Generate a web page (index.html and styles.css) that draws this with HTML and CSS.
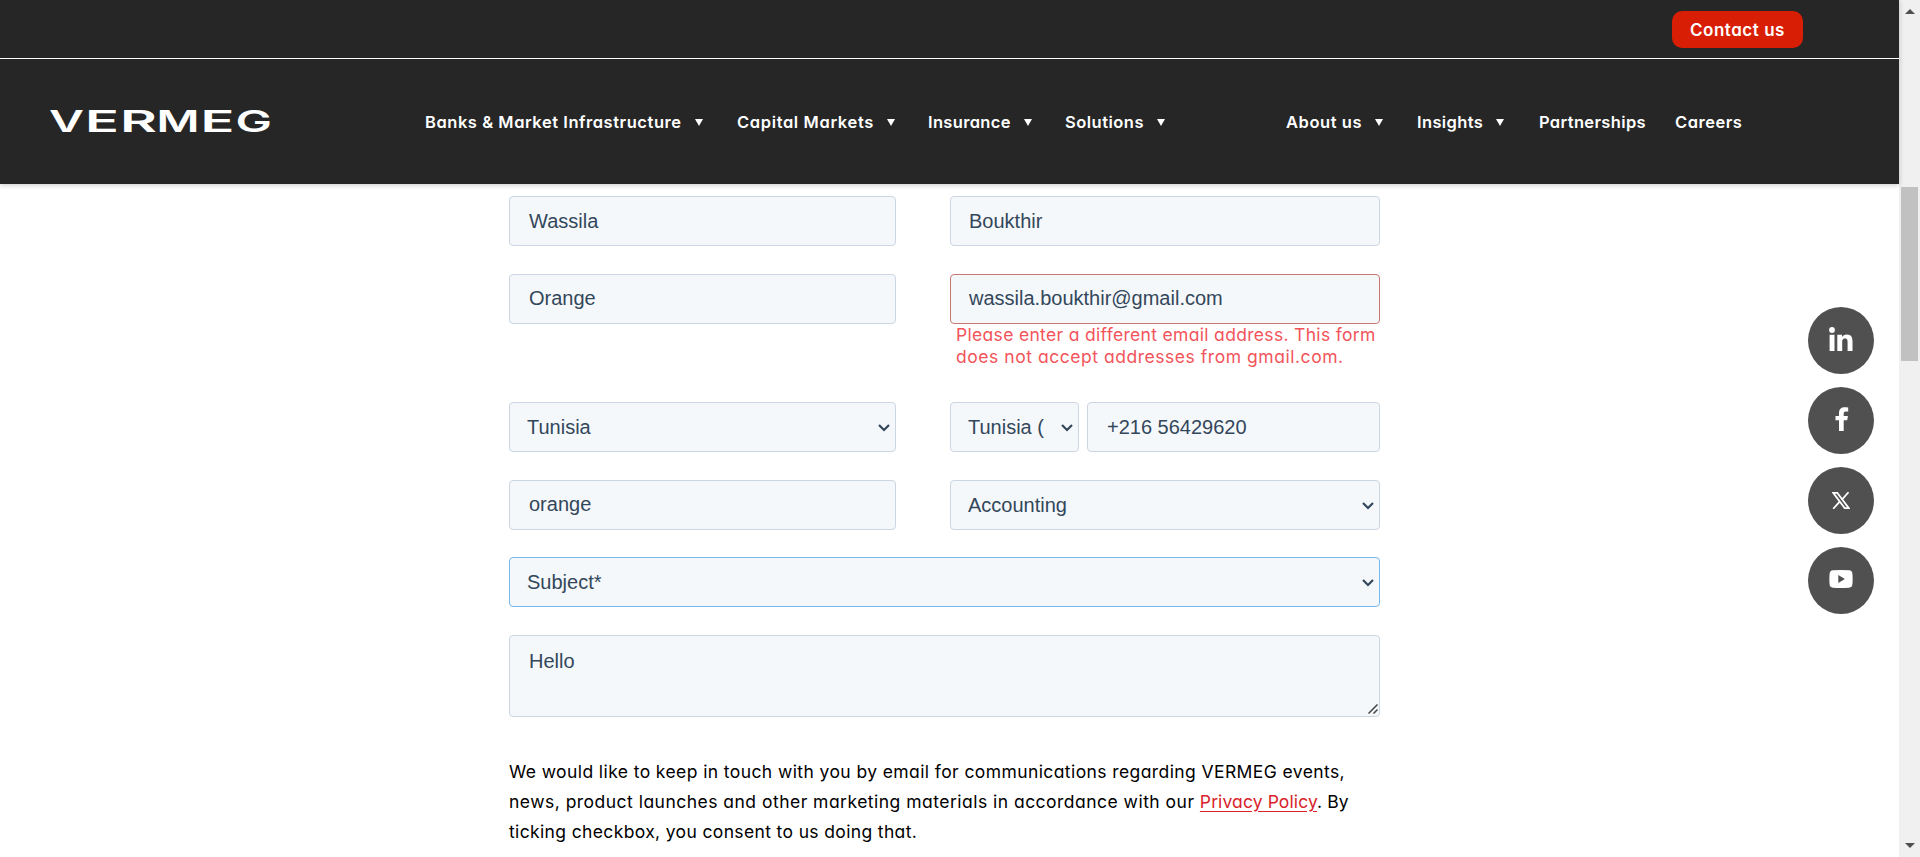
FILE: index.html
```html
<!DOCTYPE html>
<html lang="en">
<head>
<meta charset="utf-8">
<title>VERMEG - Contact us</title>
<link rel="stylesheet" href="styles.css">
</head>
<body>
<div class="page">
  <header class="header">
    <div class="topbar"><a class="contact"><span>Contact us</span></a></div>
    <div class="navbar">
      <svg class="logo" width="226" height="48" viewBox="-2 -10 226 48" role="img" aria-label="VERMEG">
        <g class="logo-text">
          <text x="-1" y="22" textLength="35" lengthAdjust="spacingAndGlyphs">V</text>
          <text x="35" y="22" textLength="34" lengthAdjust="spacingAndGlyphs">E</text>
          <text x="70" y="22" textLength="37" lengthAdjust="spacingAndGlyphs">R</text>
          <text x="106.500" y="22" textLength="43" lengthAdjust="spacingAndGlyphs">M</text>
          <text x="150.500" y="22" textLength="34" lengthAdjust="spacingAndGlyphs">E</text>
          <text x="185.500" y="22" textLength="36.500" lengthAdjust="spacingAndGlyphs">G</text>
        </g>
      </svg>
      <nav class="menu">
        <a class="item banks"><span>Banks &amp; Market Infrastructure</span><i class="caret"></i></a>
        <a class="item capital"><span>Capital Markets</span><i class="caret"></i></a>
        <a class="item insurance"><span>Insurance</span><i class="caret"></i></a>
        <a class="item solutions"><span>Solutions</span><i class="caret"></i></a>
        <a class="item about"><span>About us</span><i class="caret"></i></a>
        <a class="item insights"><span>Insights</span><i class="caret"></i></a>
        <a class="item partnerships"><span>Partnerships</span></a>
        <a class="item careers"><span>Careers</span></a>
      </nav>
    </div>
  </header>

  <main class="form">
    <div class="row">
      <div class="field">Wassila</div>
      <div class="field right">Boukthir</div>
    </div>
    <div class="row row-error">
      <div class="field raised">Orange</div>
      <div class="column">
        <div class="field raised right invalid">wassila.boukthir@gmail.com</div>
        <p class="error"><span class="e1">Please enter a different email address. This form</span><br><span class="e2">does not accept addresses from gmail.com.</span></p>
      </div>
    </div>
    <div class="row">
      <div class="field select"><span>Tunisia</span><svg class="chevron" viewBox="0 0 12 8"><path d="M1 1l5 5 5-5"/></svg></div>
      <div class="phone">
        <div class="field select"><span>Tunisia (</span><svg class="chevron" viewBox="0 0 12 8"><path d="M1 1l5 5 5-5"/></svg></div>
        <div class="field">+216 56429620</div>
      </div>
    </div>
    <div class="row row-short">
      <div class="field raised">orange</div>
      <div class="field select"><span>Accounting</span><svg class="chevron" viewBox="0 0 12 8"><path d="M1 1l5 5 5-5"/></svg></div>
    </div>
    <div class="field select focused"><span>Subject*</span><svg class="chevron" viewBox="0 0 12 8"><path d="M1 1l5 5 5-5"/></svg></div>
    <div class="field area">Hello<svg class="grip" viewBox="0 0 10 10"><path d="M0.5 9.500l9-9M5.500 9.500l4-4"/></svg></div>
    <p class="consent"><span class="c1">We would like to keep in touch with you by email for communications regarding VERMEG events,</span><br><span class="c2">news, product launches and other marketing materials in accordance with our </span><span class="c2-end"><a class="policy">Privacy Policy</a>. By</span><br><span class="c3">ticking checkbox, you consent to us doing that.</span></p>
  </main>

  <aside class="social">
    <a><svg width="24" height="24" viewBox="0 0 24 24"><circle cx="3" cy="3" r="2.900"/><path d="M.6 7.800h4.900V24H.6zM8.300 7.800H13V10c.9-1.600 2.600-2.600 4.900-2.600 4.600 0 5.600 3 5.600 7V24h-4.900v-8.500c0-2-.1-4-2.600-4s-2.800 1.900-2.800 3.900V24H8.300z"/></svg></a>
    <a><svg class="fb" width="14" height="24" viewBox="0 0 14 24"><path d="M4 24V13.300H.5V9H4V6.200C4 2.300 6.200.3 9.700.3c1.600 0 3.100.2 3.500.3v4h-2.300C9.200 4.600 8.700 5.500 8.700 6.700V9h4.200l-.7 4.300H8.700V24z"/></svg></a>
    <a><svg class="x" width="18" height="17" viewBox="0 0 18 17"><path d="M1.200.8h4l11.600 15.400h-4zM16.500.2L10.100 7.500M7.700 9.600L1.200 16.800"/></svg></a>
    <a><svg width="24" height="18" viewBox="0 0 24 18"><path fill-rule="evenodd" d="M4 .3Q12-.3 20 .3q3.200.2 3.400 3.400.5 5.300 0 10.600-.2 3.200-3.400 3.400-8 .6-16 0-3.200-.2-3.400-3.400-.5-5.300 0-10.600Q.8.500 4 .3zM9.300 5v8l6.600-4z"/></svg></a>
  </aside>
</div>
<div class="scrollbar"><i class="up"></i><i class="thumb"></i><i class="down"></i></div>
</body>
</html>
```
FILE: styles.css
```css
* { box-sizing: border-box; }
body {
  margin: 0;
  display: flex;
  width: 1920px;
  height: 857px;
  overflow: hidden;
  background: #fff;
}
.page { position: relative; width: 1899px; height: 857px; }
.header {
  height: 184px;
  background: #262626;
  color: #fff;
  box-shadow: 0 1px 5px rgba(0, 0, 0, .22);
  font: 600 16.500px/20px Inter, sans-serif;
  font-feature-settings: "cv11";
}
.topbar {
  display: flex;
  justify-content: flex-end;
  height: 59px;
  padding: 11px 96px 0 0;
  border-bottom: 1px solid #fff;
}
.contact {
  width: 131px;
  height: 37px;
  padding: 9px 0 0 18px;
  border-radius: 10px;
  background: #d81e05;
  white-space: nowrap;
}
.contact span { font-size: 17px; letter-spacing: .53px; }
.navbar { display: flex; height: 125px; }
.logo { flex: none; margin: 41px 0 0 48px; }
.logo-text { fill: #fff; font: 600 30px Inter, sans-serif; }
.menu { display: flex; margin: 53px 0 0 151px; }
.item { display: flex; align-items: center; height: 20px; white-space: nowrap; }
.banks { width: 312px; letter-spacing: .55px; }
.capital { width: 191px; letter-spacing: .64px; }
.insurance { width: 137px; letter-spacing: .34px; }
.solutions { width: 221px; letter-spacing: .49px; }
.about { width: 131px; letter-spacing: .56px; }
.insights { width: 122px; letter-spacing: .37px; }
.partnerships { width: 136px; letter-spacing: .35px; }
.careers { letter-spacing: .51px; }
.caret {
  margin-left: 13px;
  border: 4.500px solid transparent;
  border-top: 7px solid #fff;
  border-bottom: 0;
}
.form {
  width: 871px;
  margin: 12px 0 0 509px;
  color: #33475b;
  font: 20px/24px "Liberation Sans", Arial, sans-serif;
}
.row {
  display: grid;
  grid-template-columns: 387px 430px;
  column-gap: 54px;
  align-items: start;
  margin-bottom: 28px;
}
.row-error { height: 100px; }
.row-short { margin-bottom: 27px; }
.field {
  height: 50px;
  padding: 12px 0 0 19px;
  border: 1px solid #cbd6e2;
  border-radius: 4px;
  background: #f5f8fa;
  white-space: nowrap;
}
.right { padding-left: 18px; }
.raised { padding-top: 11px; }
.invalid { border-color: #c87872; }
.select {
  display: flex;
  justify-content: space-between;
  padding-left: 17px;
  padding-right: 5px;
}
.focused { border-color: #76b9ec; }
.chevron {
  width: 12px;
  height: 8px;
  margin-top: 9px;
  fill: none;
  stroke: #33475b;
  stroke-width: 2.200;
}
.phone { display: grid; grid-template-columns: 129px 293px; column-gap: 8px; }
.error {
  margin: 0 0 0 6px;
  color: #f2545b;
  font: 17.500px/22px Inter, sans-serif;
  font-feature-settings: "cv11";
  white-space: nowrap;
}
.e1 { letter-spacing: .32px; }
.e2 { letter-spacing: .54px; }
.area { position: relative; height: 82px; margin-top: 28px; padding-top: 13px; }
.grip {
  position: absolute;
  right: 1px;
  bottom: 2px;
  width: 10px;
  height: 10px;
  fill: none;
  stroke: #444;
  stroke-width: 1.500;
}
.consent {
  margin: 40px 0 0;
  color: #000;
  font: 17.500px/30px Inter, sans-serif;
  font-feature-settings: "cv11";
  white-space: nowrap;
}
.c1 { letter-spacing: .405px; }
.c2 { letter-spacing: .48px; }
.c2-end { letter-spacing: .11px; }
.c3 { letter-spacing: .36px; }
.policy { color: #d8232a; text-decoration: underline; text-underline-offset: 3px; }
.social {
  position: absolute;
  top: 307px;
  left: 1808px;
  display: grid;
  gap: 13px;
}
.social a {
  display: grid;
  place-items: center;
  width: 66px;
  height: 67px;
  border-radius: 50%;
  background: #505050;
}
.social svg { fill: #fff; margin-bottom: 4px; }
.social .fb { margin-left: 1px; }
.social .x { fill: none; stroke: #fff; stroke-width: 1.800; margin: 0; }
.scrollbar {
  display: flex;
  flex-direction: column;
  align-items: center;
  width: 21px;
  height: 857px;
  padding: 9px 0;
  background: #f0f0f0;
}
.up { border: 5px solid transparent; border-top: 0; border-bottom-color: #505050; }
.thumb { width: 17px; height: 174px; margin-top: 173px; background: #c1c1c1; }
.down { margin-top: auto; border: 5px solid transparent; border-bottom: 0; border-top-color: #505050; }
```
